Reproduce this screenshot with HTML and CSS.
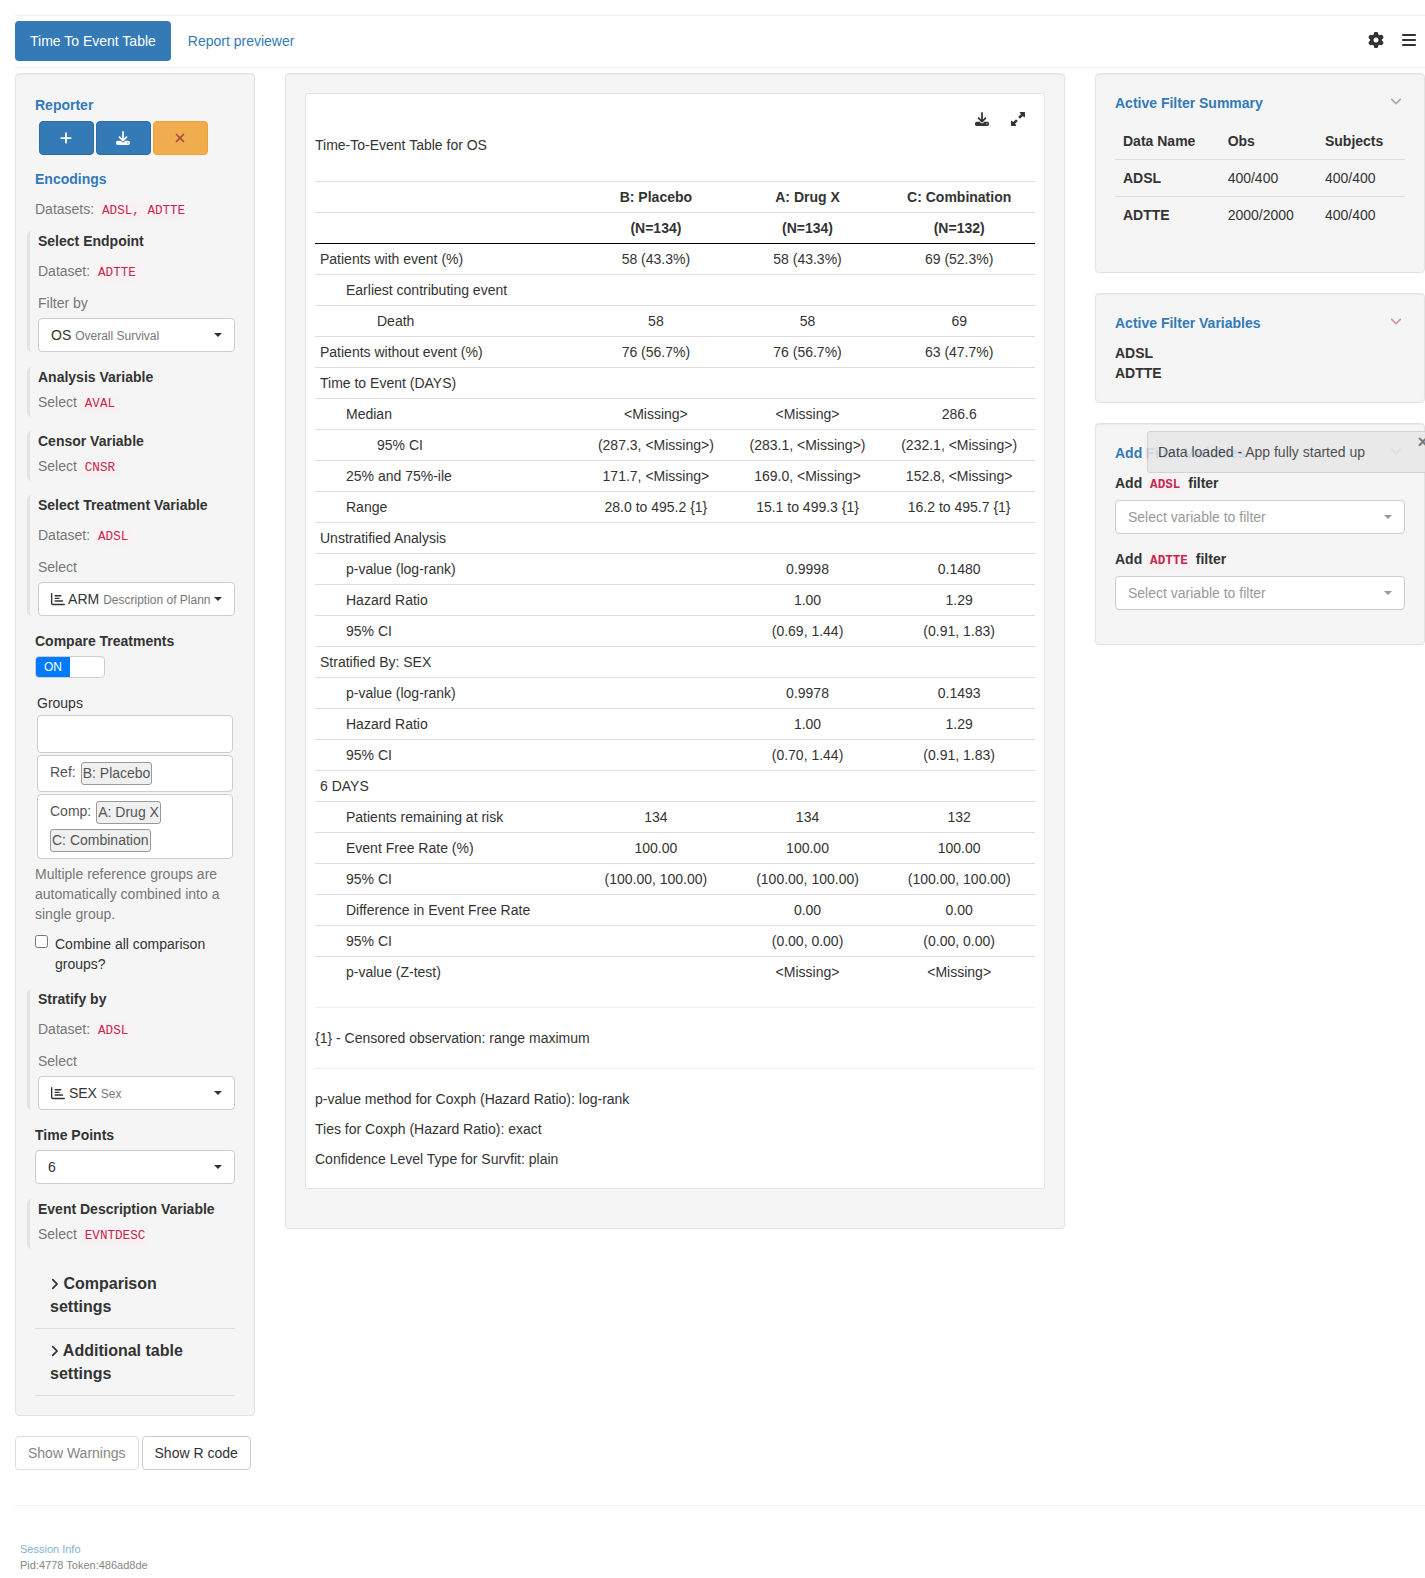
FILE: index.html
```html
<!DOCTYPE html>
<html lang="en">
<head>
<meta charset="utf-8">
<meta name="viewport" content="width=device-width, initial-scale=1">
<title>Time To Event Table</title>
<link rel="stylesheet" href="styles.css">
</head>
<body>
<svg class="sprite" aria-hidden="true">
  <symbol id="plus" viewBox="0 0 448 512"><path d="M256 80c0-17.7-14.3-32-32-32s-32 14.3-32 32V224H48c-17.7 0-32 14.3-32 32s14.3 32 32 32H192V432c0 17.7 14.3 32 32 32s32-14.3 32-32V288H400c17.7 0 32-14.3 32-32s-14.3-32-32-32H256V80z"/></symbol>
  <symbol id="download" viewBox="0 0 512 512"><path d="M288 32c0-17.7-14.3-32-32-32s-32 14.3-32 32V274.7l-73.4-73.4c-12.5-12.5-32.8-12.5-45.3 0s-12.5 32.8 0 45.3l128 128c12.5 12.5 32.8 12.5 45.3 0l128-128c12.5-12.5 12.5-32.8 0-45.3s-32.8-12.5-45.3 0L288 274.7V32zM64 352c-35.3 0-64 28.7-64 64v32c0 35.3 28.7 64 64 64H448c35.3 0 64-28.7 64-64V416c0-35.3-28.7-64-64-64H346.5l-45.3 45.3c-25 25-65.5 25-90.5 0L165.5 352H64zm368 56a24 24 0 1 1 0 48 24 24 0 1 1 0-48z"/></symbol>
  <symbol id="xmark" viewBox="0 0 384 512"><path d="M342.6 150.6c12.5-12.5 12.5-32.8 0-45.3s-32.8-12.5-45.3 0L192 210.7 86.6 105.4c-12.5-12.5-32.8-12.5-45.3 0s-12.5 32.8 0 45.3L146.7 256 41.4 361.4c-12.5 12.5-12.5 32.8 0 45.3s32.8 12.5 45.3 0L192 301.3 297.4 406.6c12.5 12.5 32.8 12.5 45.3 0s12.5-32.8 0-45.3L237.3 256 342.6 150.6z"/></symbol>
  <symbol id="bars" viewBox="0 0 448 512"><path d="M0 96C0 78.3 14.3 64 32 64H416c17.7 0 32 14.3 32 32s-14.3 32-32 32H32C14.3 128 0 113.7 0 96zM0 256c0-17.7 14.3-32 32-32H416c17.7 0 32 14.3 32 32s-14.3 32-32 32H32c-17.7 0-32-14.3-32-32zM448 416c0 17.7-14.3 32-32 32H32c-17.7 0-32-14.3-32-32s14.3-32 32-32H416c17.7 0 32 14.3 32 32z"/></symbol>
  <symbol id="gear" viewBox="0 0 512 512"><path d="M495.9 166.6c3.2 8.7 .5 18.4-6.4 24.6l-43.3 39.4c1.1 8.3 1.7 16.8 1.7 25.4s-.6 17.1-1.7 25.4l43.3 39.4c6.9 6.2 9.6 15.9 6.4 24.6c-4.4 11.9-9.7 23.3-15.8 34.3l-4.7 8.1c-6.6 11-14 21.4-22.1 31.2c-5.9 7.2-15.7 9.6-24.5 6.8l-55.7-17.7c-13.4 10.3-28.2 18.9-44 25.4l-12.5 57.1c-2 9.1-9 16.3-18.2 17.8c-13.8 2.3-28 3.5-42.5 3.5s-28.7-1.2-42.5-3.5c-9.2-1.5-16.2-8.7-18.2-17.8l-12.5-57.1c-15.8-6.5-30.6-15.1-44-25.4L83.1 425.9c-8.8 2.8-18.6 .3-24.5-6.8c-8.1-9.8-15.5-20.2-22.1-31.2l-4.7-8.1c-6.1-11-11.4-22.4-15.8-34.3c-3.2-8.7-.5-18.4 6.4-24.6l43.3-39.4C64.6 273.1 64 264.6 64 256s.6-17.1 1.7-25.4L22.4 191.2c-6.9-6.2-9.6-15.9-6.4-24.6c4.4-11.9 9.7-23.3 15.8-34.3l4.7-8.1c6.6-11 14-21.4 22.1-31.2c5.9-7.2 15.7-9.6 24.5-6.8l55.7 17.7c13.4-10.3 28.2-18.9 44-25.4l12.5-57.1c2-9.1 9-16.3 18.2-17.8C227.3 1.2 241.5 0 256 0s28.7 1.2 42.5 3.5c9.2 1.5 16.2 8.7 18.2 17.8l12.5 57.1c15.8 6.5 30.6 15.1 44 25.4l55.7-17.7c8.8-2.8 18.6-.3 24.5 6.8c8.1 9.8 15.5 20.2 22.1 31.2l4.7 8.1c6.1 11 11.4 22.4 15.8 34.3zM256 336a80 80 0 1 0 0-160 80 80 0 1 0 0 160z"/></symbol>
  <symbol id="angle-down" viewBox="0 0 448 512"><path d="M201.4 342.6c12.5 12.5 32.8 12.5 45.3 0l160-160c12.5-12.5 12.5-32.8 0-45.3s-32.8-12.5-45.3 0L224 274.7 86.6 137.4c-12.5-12.5-32.8-12.5-45.3 0s-12.5 32.8 0 45.3l160 160z"/></symbol>
  <symbol id="angle-right" viewBox="0 0 320 512"><path d="M278.6 233.4c12.5 12.5 12.5 32.8 0 45.3l-160 160c-12.5 12.5-32.8 12.5-45.3 0s-12.5-32.8 0-45.3L210.7 256 73.4 118.6c-12.5-12.5-12.5-32.8 0-45.3s32.8-12.5 45.3 0l160 160z"/></symbol>
  <symbol id="expand" viewBox="0 0 512 512"><path d="M344 0H488c13.3 0 24 10.7 24 24V168c0 9.7-5.8 18.5-14.8 22.2s-19.3 1.7-26.2-5.2l-39-39-87 87c-9.4 9.4-24.6 9.4-33.9 0l-32-32c-9.4-9.4-9.4-24.6 0-33.9l87-87L327 41c-6.9-6.9-8.9-17.2-5.2-26.2S334.3 0 344 0zM168 512H24c-13.3 0-24-10.7-24-24V344c0-9.7 5.8-18.5 14.8-22.2s19.3-1.7 26.2 5.2l39 39 87-87c9.4-9.4 24.6-9.4 33.9 0l32 32c9.4 9.4 9.4 24.6 0 33.9l-87 87 39 39c6.9 6.9 8.9 17.2 5.2 26.2s-12.5 14.8-22.2 14.8z"/></symbol>
  <symbol id="chart" viewBox="0 0 512 512"><path d="M24 32c13.3 0 24 10.7 24 24V408c0 13.3 10.7 24 24 24H488c13.3 0 24 10.7 24 24s-10.7 24-24 24H72c-39.8 0-72-32.2-72-72V56C0 42.7 10.7 32 24 32zM128 136c0-13.3 10.7-24 24-24l208 0c13.3 0 24 10.7 24 24s-10.7 24-24 24l-208 0c-13.3 0-24-10.7-24-24zm24 72H296c13.3 0 24 10.7 24 24s-10.7 24-24 24H152c-13.3 0-24-10.7-24-24s10.7-24 24-24zm0 96H424c13.3 0 24 10.7 24 24s-10.7 24-24 24H152c-13.3 0-24-10.7-24-24s10.7-24 24-24z"/></symbol>
</svg>

<header class="topbar">
  <nav class="pills">
    <a class="pill active" href="#tte">Time To Event Table</a>
    <a class="pill" href="#report">Report previewer</a>
  </nav>
  <div class="tools">
    <button class="icon-btn" aria-label="Filter settings"><svg class="icon16"><use href="#gear"/></svg></button>
    <button class="icon-btn" aria-label="Menu"><svg class="icon-bars"><use href="#bars"/></svg></button>
  </div>
</header>

<main class="columns">
  <div class="encoding-column">
    <aside class="well encoding">
      <h2 class="heading">Reporter</h2>
      <div class="reporter-buttons">
        <button class="btn primary" aria-label="Add card"><svg class="icon14"><use href="#plus"/></svg></button>
        <button class="btn primary" aria-label="Download report"><svg class="icon14"><use href="#download"/></svg></button>
        <button class="btn warning" aria-label="Reset report"><svg class="icon14"><use href="#xmark"/></svg></button>
      </div>
      <h2 class="heading">Encodings</h2>
      <p class="help datasets">Datasets: <code>ADSL, ADTTE</code></p>

      <section class="extract">
        <h3 class="label">Select Endpoint</h3>
        <p class="help dataset">Dataset: <code>ADTTE</code></p>
        <label class="help" for="endpoint">Filter by</label>
        <div class="picker">
          <select id="endpoint" class="rich"><option>OS Overall Survival</option></select>
          <span class="value" aria-hidden="true">OS <small>Overall Survival</small></span>
        </div>
      </section>
      <section class="extract fixed">
        <h3 class="label">Analysis Variable</h3>
        <p class="help">Select <code>AVAL</code></p>
      </section>
      <section class="extract fixed">
        <h3 class="label">Censor Variable</h3>
        <p class="help">Select <code>CNSR</code></p>
      </section>
      <section class="extract">
        <h3 class="label">Select Treatment Variable</h3>
        <p class="help dataset">Dataset: <code>ADSL</code></p>
        <label class="help" for="treatment">Select</label>
        <div class="picker">
          <select id="treatment" class="rich"><option>ARM Description of Planned Arm</option></select>
          <span class="value" aria-hidden="true"><svg class="icon14"><use href="#chart"/></svg> ARM <small>Description of Planned Arm</small></span>
        </div>
      </section>

      <div class="field">
        <label class="label" for="compare">Compare Treatments</label>
        <div class="switch"><input type="checkbox" id="compare" checked><span class="on">ON</span></div>
      </div>

      <div class="buckets">
        <span>Groups</span>
        <div class="bucket empty"></div>
        <div class="bucket">Ref: <span class="tag">B: Placebo</span></div>
        <div class="bucket">Comp: <span class="tag">A: Drug X</span> <span class="tag">C: Combination</span></div>
      </div>
      <p class="help">Multiple reference groups are automatically combined into a single group.</p>
      <div class="check">
        <input type="checkbox" id="combine">
        <label for="combine">Combine all comparison groups?</label>
      </div>

      <section class="extract">
        <h3 class="label">Stratify by</h3>
        <p class="help dataset">Dataset: <code>ADSL</code></p>
        <label class="help" for="strata">Select</label>
        <div class="picker">
          <select id="strata" class="rich"><option>SEX Sex</option></select>
          <span class="value" aria-hidden="true"><svg class="icon14"><use href="#chart"/></svg> SEX <small>Sex</small></span>
        </div>
      </section>
      <div class="field">
        <label class="label" for="timepoints">Time Points</label>
        <div class="picker"><select id="timepoints"><option>6</option></select></div>
      </div>
      <section class="extract fixed last">
        <h3 class="label">Event Description Variable</h3>
        <p class="help">Select <code>EVNTDESC</code></p>
      </section>

      <div class="panels">
        <button class="panel"><svg class="icon-right"><use href="#angle-right"/></svg> Comparison settings</button>
        <button class="panel"><svg class="icon-right"><use href="#angle-right"/></svg> Additional table settings</button>
      </div>
    </aside>
    <div class="code-buttons">
      <button class="btn" disabled>Show Warnings</button>
      <button class="btn">Show R code</button>
    </div>
  </div>

  <section class="well output" id="tte">
    <div class="card">
      <div class="card-tools">
        <button class="icon-btn" aria-label="Download table"><svg class="icon14"><use href="#download"/></svg></button>
        <button class="icon-btn" aria-label="Expand table"><svg class="icon14"><use href="#expand"/></svg></button>
      </div>
      <p class="table-title">Time-To-Event Table for OS</p>
      <table class="tte">
        <thead>
          <tr><th></th><th>B: Placebo</th><th>A: Drug X</th><th>C: Combination</th></tr>
          <tr><th></th><th>(N=134)</th><th>(N=134)</th><th>(N=132)</th></tr>
        </thead>
        <tbody>
          <tr><td>Patients with event (%)</td><td>58 (43.3%)</td><td>58 (43.3%)</td><td>69 (52.3%)</td></tr>
          <tr><td class="in1">Earliest contributing event</td><td></td><td></td><td></td></tr>
          <tr><td class="in2">Death</td><td>58</td><td>58</td><td>69</td></tr>
          <tr><td>Patients without event (%)</td><td>76 (56.7%)</td><td>76 (56.7%)</td><td>63 (47.7%)</td></tr>
          <tr><td>Time to Event (DAYS)</td><td></td><td></td><td></td></tr>
          <tr><td class="in1">Median</td><td>&lt;Missing&gt;</td><td>&lt;Missing&gt;</td><td>286.6</td></tr>
          <tr><td class="in2">95% CI</td><td>(287.3, &lt;Missing&gt;)</td><td>(283.1, &lt;Missing&gt;)</td><td>(232.1, &lt;Missing&gt;)</td></tr>
          <tr><td class="in1">25% and 75%-ile</td><td>171.7, &lt;Missing&gt;</td><td>169.0, &lt;Missing&gt;</td><td>152.8, &lt;Missing&gt;</td></tr>
          <tr><td class="in1">Range</td><td>28.0 to 495.2 {1}</td><td>15.1 to 499.3 {1}</td><td>16.2 to 495.7 {1}</td></tr>
          <tr><td>Unstratified Analysis</td><td></td><td></td><td></td></tr>
          <tr><td class="in1">p-value (log-rank)</td><td></td><td>0.9998</td><td>0.1480</td></tr>
          <tr><td class="in1">Hazard Ratio</td><td></td><td>1.00</td><td>1.29</td></tr>
          <tr><td class="in1">95% CI</td><td></td><td>(0.69, 1.44)</td><td>(0.91, 1.83)</td></tr>
          <tr><td>Stratified By: SEX</td><td></td><td></td><td></td></tr>
          <tr><td class="in1">p-value (log-rank)</td><td></td><td>0.9978</td><td>0.1493</td></tr>
          <tr><td class="in1">Hazard Ratio</td><td></td><td>1.00</td><td>1.29</td></tr>
          <tr><td class="in1">95% CI</td><td></td><td>(0.70, 1.44)</td><td>(0.91, 1.83)</td></tr>
          <tr><td>6 DAYS</td><td></td><td></td><td></td></tr>
          <tr><td class="in1">Patients remaining at risk</td><td>134</td><td>134</td><td>132</td></tr>
          <tr><td class="in1">Event Free Rate (%)</td><td>100.00</td><td>100.00</td><td>100.00</td></tr>
          <tr><td class="in1">95% CI</td><td>(100.00, 100.00)</td><td>(100.00, 100.00)</td><td>(100.00, 100.00)</td></tr>
          <tr><td class="in1">Difference in Event Free Rate</td><td></td><td>0.00</td><td>0.00</td></tr>
          <tr><td class="in1">95% CI</td><td></td><td>(0.00, 0.00)</td><td>(0.00, 0.00)</td></tr>
          <tr><td class="in1">p-value (Z-test)</td><td></td><td>&lt;Missing&gt;</td><td>&lt;Missing&gt;</td></tr>
        </tbody>
      </table>
      <hr>
      <p>{1} - Censored observation: range maximum</p>
      <hr>
      <p>p-value method for Coxph (Hazard Ratio): log-rank</p>
      <p>Ties for Coxph (Hazard Ratio): exact</p>
      <p>Confidence Level Type for Survfit: plain</p>
    </div>
  </section>

  <aside class="filters">
    <section class="well">
      <div class="filter-head"><h2 class="heading">Active Filter Summary</h2><button class="icon-btn muted" aria-label="Toggle summary"><svg class="icon-down"><use href="#angle-down"/></svg></button></div>
      <table class="summary">
        <thead><tr><th>Data Name</th><th>Obs</th><th>Subjects</th></tr></thead>
        <tbody>
          <tr><th>ADSL</th><td>400/400</td><td>400/400</td></tr>
          <tr><th>ADTTE</th><td>2000/2000</td><td>400/400</td></tr>
        </tbody>
      </table>
    </section>
    <section class="well">
      <div class="filter-head"><h2 class="heading">Active Filter Variables</h2><button class="icon-btn danger" aria-label="Toggle variables"><svg class="icon-down"><use href="#angle-down"/></svg></button></div>
      <h3 class="label">ADSL</h3>
      <h3 class="label">ADTTE</h3>
    </section>
    <section class="well">
      <div class="filter-head"><h2 class="heading">Add Filter Variables</h2><button class="icon-btn muted" aria-label="Toggle adding"><svg class="icon-down"><use href="#angle-down"/></svg></button></div>
      <div class="add-filter">
        <label class="label" for="add-adsl">Add <code>ADSL</code> filter</label>
        <div class="picker light"><select id="add-adsl"><option>Select variable to filter</option></select></div>
      </div>
      <div class="add-filter">
        <label class="label" for="add-adtte">Add <code>ADTTE</code> filter</label>
        <div class="picker light"><select id="add-adtte"><option>Select variable to filter</option></select></div>
      </div>
    </section>
    <div class="toast" role="status"><span>Data loaded - App fully started up</span><button class="close" aria-label="Close">×</button></div>
  </aside>
</main>

<footer class="footer">
  <a href="#session">Session Info</a>
  <span>Pid:4778 Token:486ad8de</span>
</footer>
</body>
</html>
```
FILE: styles.css
```css
* { box-sizing: border-box; }

body {
  margin: 0;
  padding: 15px 0 0 15px;
  overflow-x: hidden;
  background: #fff;
  color: #333;
  font: 14px/20px "Liberation Sans", Arial, sans-serif;
}

h2, h3, p { margin: 0; font-size: 14px; line-height: 20px; }
button, select, input { font: inherit; color: inherit; margin: 0; }
button { cursor: pointer; }
a { color: #337ab7; text-decoration: none; }

code {
  padding: 2px 4px;
  border-radius: 4px;
  background: #f9f2f4;
  color: #c7254e;
  font-family: "Liberation Mono", "Courier New", monospace;
  font-size: 90%;
  line-height: 16px;
}

.sprite { position: absolute; width: 0; height: 0; }
svg { fill: currentColor; flex: none; }
.icon14 { width: 14px; height: 14px; }
.icon16 { width: 16px; height: 16px; }
.icon-bars { width: 14px; height: 16px; }
.icon-down { width: 12px; height: 14px; }
.icon-right { width: 9px; height: 14px; vertical-align: -2px; }

.icon-btn { display: flex; padding: 0; border: 0; background: none; }
.muted { color: #aaa; }
.danger { color: #d2969c; }

/* Top bar */
.topbar {
  display: flex;
  justify-content: space-between;
  align-items: center;
  padding: 5px 9px 6px 0;
  border-top: 1px solid #eee;
  border-bottom: 1px solid #eee;
}
.pills { display: flex; gap: 2px; }
.pill { padding: 10px 15px; border-radius: 4px; }
.pill.active { background: #337ab7; color: #fff; }
.tools { display: flex; gap: 18px; margin-bottom: 2px; }

/* Layout */
.columns {
  display: grid;
  grid-template-columns: 8fr 26fr 11fr;
  gap: 30px;
  align-items: start;
  margin-top: 5px;
}
.encoding-column, .output, .filters { min-width: 0; }

.well {
  padding: 19px;
  border: 1px solid #e3e3e3;
  border-radius: 4px;
  background: #f5f5f5;
  box-shadow: inset 0 1px 1px rgba(0, 0, 0, .05);
}
.heading { color: #337ab7; font-weight: bold; }
.label { display: block; font-weight: bold; }
.help { display: block; color: #777; }

/* Encoding panel */
.encoding { padding-top: 21px; }
.reporter-buttons { display: flex; gap: 2px; margin: 6px 4px 14px; }
.btn {
  display: flex;
  justify-content: center;
  align-items: center;
  height: 34px;
  padding: 0 12px;
  border: 1px solid #ccc;
  border-radius: 4px;
  background: #fff;
}
.btn:disabled { border-color: #ddd; color: #858585; }
.reporter-buttons .btn { width: 55px; padding-right: 13px; }
.btn.primary { border-color: #2e6da4; background: #337ab7; color: #fff; }
.btn.warning { border-color: #eea236; background: #f0ad4e; color: #b04a46; }
.datasets { margin: 10px 0 12px; }

.extract {
  margin: 0 0 15px -8px;
  padding-left: 8px;
  border-left: 3px solid #e3e3e3;
  border-radius: 5px 0 0 5px;
}
.extract.fixed { margin-bottom: 14px; padding-bottom: 5px; }
.extract.last { margin-bottom: 13px; }
.extract.fixed .help { margin-top: 5px; }
.dataset { margin: 10px 0 12px; }

.picker { display: grid; align-items: center; margin-top: 5px; }
.picker > * { grid-area: 1 / 1; min-width: 0; }
.picker select {
  width: 100%;
  height: 34px;
  padding: 0 30px 0 12px;
  border: 1px solid #ccc;
  border-radius: 4px;
  background: #fff;
  appearance: none;
}
.picker select.rich { color: transparent; }
.picker::after {
  content: "";
  grid-area: 1 / 1;
  justify-self: end;
  margin-right: 13px;
  border: 4px solid transparent;
  border-top-color: #333;
  border-bottom: 0;
  pointer-events: none;
}
.picker.light select { color: #999; }
.picker.light::after { border-top-color: #999; }
.value {
  margin: 0 25px 0 13px;
  overflow: hidden;
  white-space: nowrap;
  pointer-events: none;
}
.value svg { vertical-align: -2px; }
.value small { color: #777; font-size: 12px; }

.field { margin-bottom: 15px; }
.switch {
  display: grid;
  grid-template-columns: 1fr 1fr;
  width: 70px;
  height: 22px;
  margin-top: 5px;
  border: 1px solid #ccc;
  border-radius: 4px;
  background: #fff;
  overflow: hidden;
}
.switch input { grid-area: 1 / 1 / 2 / 3; width: 100%; height: 100%; opacity: 0; }
.on {
  grid-area: 1 / 1;
  background: #007bff;
  color: #fff;
  font-size: 12px;
  text-align: center;
  pointer-events: none;
}

.buckets { display: flex; flex-direction: column; gap: 2px; margin: 0 2px 5px; }
.bucket {
  display: flex;
  flex-wrap: wrap;
  gap: 5px;
  padding: 6px 12px;
  border: 1px solid #ccc;
  border-radius: 4px;
  background: #fff;
  color: #555;
}
.bucket.empty { height: 38px; }
.tag {
  padding: 0 1px;
  height: 23px;
  border: 1px solid #999;
  border-radius: 3px;
  background: #f0f0f0;
}
.check { display: flex; gap: 7px; margin: 10px 0 15px; }
.check input { flex: none; width: 13px; height: 13px; margin-top: 1px; }

.panel {
  display: block;
  width: 100%;
  padding: 10px 15px;
  border: 0;
  border-bottom: 1px solid #ddd;
  background: none;
  font-size: 16px;
  font-weight: bold;
  line-height: 23px;
  text-align: left;
}
.code-buttons { display: flex; gap: 3px; margin-top: 20px; white-space: nowrap; }

/* Output */
.output { padding-bottom: 39px; }
.card {
  padding: 18px 9px 9px;
  border: 1px solid #e3e3e3;
  border-radius: 3px;
  background: #fff;
}
.card-tools { display: flex; justify-content: flex-end; gap: 22px; padding-right: 10px; }
.card p { margin-bottom: 10px; }
.card .table-title { margin: 9px 0 26px; }
.card hr { margin: 20px 0; border: 0; border-top: 1px solid #eee; }

table { width: 100%; border-collapse: collapse; }
.tte th, .tte td { padding: 5px; border-top: 1px solid #ddd; text-align: center; }
.tte thead { border-bottom: 1px solid #000; }
.tte tbody tr:first-child td { border-top-color: #000; }
.tte td:first-child { text-align: left; }
.tte .in1 { padding-left: 31px; }
.tte .in2 { padding-left: 62px; }

/* Filters */
.filters { display: flex; flex-direction: column; gap: 20px; position: relative; }
.filter-head { display: flex; justify-content: space-between; align-items: flex-start; margin-bottom: 10px; padding-right: 3px; }
.filter-head .icon-btn { margin-top: 2px; }
.summary { margin-bottom: 20px; text-align: left; }
.summary th, .summary td { padding: 8px; }
.summary tbody tr { border-top: 1px solid #ddd; }
.add-filter { margin-bottom: 15px; }
.add-filter .picker { margin-top: 7px; }

.toast {
  position: absolute;
  top: 358px;
  left: 52px;
  right: -8px;
  display: flex;
  justify-content: space-between;
  padding: 10px 4px 10px 10px;
  border: 1px solid #ccc;
  border-radius: 3px;
  background: #e8e8e8;
  opacity: .85;
}
.close {
  height: 14px;
  margin-top: -7px;
  padding: 0;
  border: 0;
  background: none;
  color: #666;
  font-size: 18px;
  font-weight: bold;
  line-height: 14px;
}

/* Footer */
.footer {
  display: flex;
  flex-direction: column;
  margin-top: 35px;
  padding: 35px 5px 4px;
  border-top: 1px solid #eee;
  color: #858585;
  font-size: 11px;
  line-height: 16px;
}
.footer a { color: #85afd4; }
```
